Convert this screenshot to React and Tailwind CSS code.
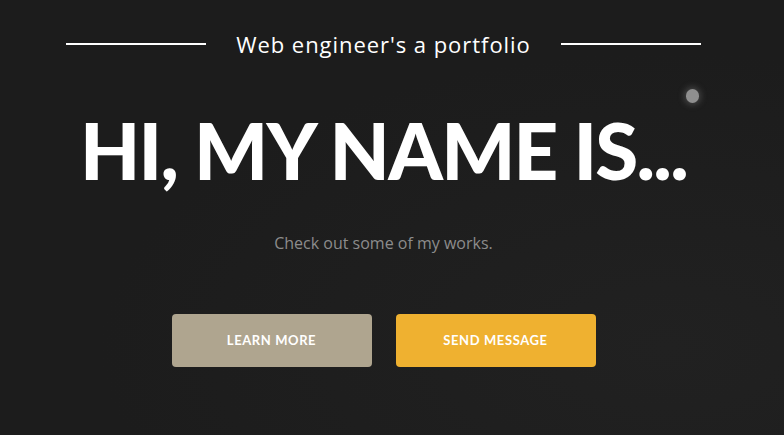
import React from 'react';

export default function App() {
  return (
    <div className="relative w-full h-[435px] overflow-hidden bg-[#1c1c1c]">
      {/* faint texture toward the lower right */}
      <div className="absolute inset-0 bg-[radial-gradient(ellipse_at_85%_80%,#212121_0%,#1c1c1c_60%)]" />
      {/* moon */}
      <div className="absolute left-[686px] top-[89px] w-[13px] h-[14px] rounded-full bg-[#8f8f8f] shadow-[0_0_6px_2px_rgba(130,130,130,0.4)]" />

      <div className="relative w-[767px] flex flex-col items-center pt-[30px]" style={{ fontFamily: '"Open Sans", Lato, sans-serif' }}>
        <div className="flex items-center gap-[30px]">
          <div className="w-[140px] h-[2px] bg-white" />
          <p className="text-[22px] leading-[28px] text-white tracking-[0.95px]">Web engineer's a portfolio</p>
          <div className="w-[140px] h-[2px] bg-white" />
        </div>

        <h1 className="mt-[47px] text-[78px] leading-[90px] font-black text-white tracking-[-1.75px]" style={{ fontFamily: 'Lato, sans-serif' }}>HI, MY NAME IS...</h1>

        <p className="mt-[37px] text-[16px] leading-[22px] text-[#8c8c8c]">Check out some of my works.</p>

        <div className="mt-[60px] flex gap-[24px]">
          <button className="w-[200px] h-[53px] rounded-[4px] bg-[#afa58f] text-white text-[13px] font-bold tracking-[0.6px]" style={{ fontFamily: 'Lato, sans-serif' }}>LEARN MORE</button>
          <button className="w-[200px] h-[53px] rounded-[4px] bg-[#efb130] text-white text-[13px] font-bold tracking-[0.6px]" style={{ fontFamily: 'Lato, sans-serif' }}>SEND MESSAGE</button>
        </div>
      </div>
    </div>
  );
}
